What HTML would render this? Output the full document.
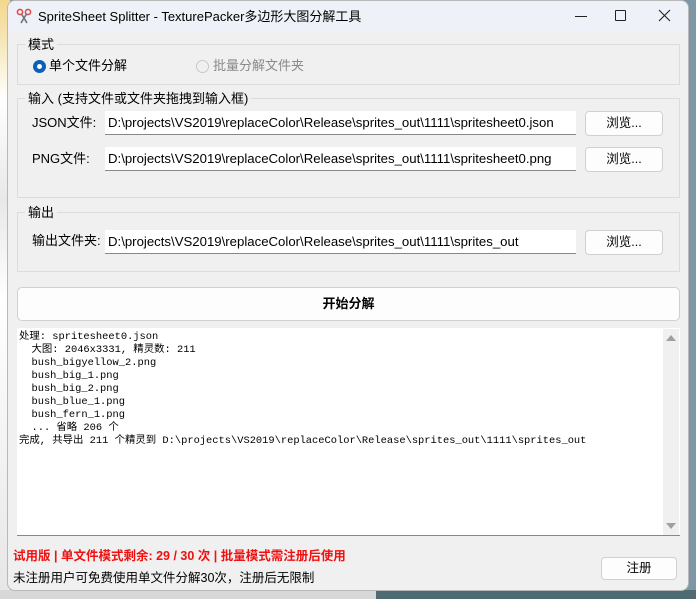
<!DOCTYPE html>
<html><head><meta charset="utf-8"><style>
*{box-sizing:border-box;margin:0;padding:0}
body{width:696px;height:599px;position:relative;overflow:hidden;background:#7e97a6;font-family:"Liberation Sans","Noto Sans CJK SC",sans-serif;font-size:13px;line-height:16px;color:#000}
.abs{position:absolute}
#leftbg{left:0;top:0;width:10px;height:599px;background:linear-gradient(#f3d78c 0,#f6e6b8 40px,#fff 100px,#e8e8e8 200px,#fff 300px,#e6e6e6 599px)}
#botbg{left:0;top:590px;width:696px;height:9px;background:#d8d8d8}
#botbg2{left:376px;top:590px;width:320px;height:9px;background:#4f6b72}
#win{left:7px;top:0;width:682px;height:591px;background:#f0f0f0;border:1px solid #b8b8b8;border-radius:8px;overflow:hidden}
#title{left:0;top:0;width:680px;height:31px;background:#eef2f8}
.group{border:1px solid #dcdcdc}
.glabel{background:#f0f0f0;padding:0 3px}
.field{background:#fff;border-bottom:1px solid #888;height:24px;line-height:24px;padding-left:3px;white-space:nowrap;overflow:hidden;font-size:13.2px}
.btn{background:#fdfdfd;border:1px solid #d0d0d0;border-radius:4px;text-align:center;line-height:23px;font-size:12.5px}
.log{font-family:"Liberation Mono","Noto Sans CJK SC",monospace;font-size:10.4px;line-height:13px;white-space:pre}
</style></head><body>
<div class="abs" id="leftbg"></div>
<div class="abs" id="botbg"></div><div class="abs" id="botbg2"></div>
<div class="abs" id="win">
 <div class="abs" id="title"></div>
 <svg class="abs" style="left:8px;top:7px" width="16" height="16" viewBox="0 0 16 16"><circle cx="4" cy="4" r="2.6" fill="none" stroke="#e05050" stroke-width="1.6"/><circle cx="12" cy="4" r="2.6" fill="none" stroke="#e05050" stroke-width="1.6"/><path d="M5.5 6 L11 15 M10.5 6 L5 15" stroke="#707080" stroke-width="1.6"/></svg>
 <div class="abs" style="left:30px;top:8px;font-size:13px">SpriteSheet Splitter - TexturePacker多边形大图分解工具</div>
 <div class="abs" style="left:567px;top:15px;width:12px;height:1px;background:#222"></div>
 <div class="abs" style="left:607px;top:9px;width:11px;height:11px;border:1px solid #222;border-radius:1px"></div>
 <svg class="abs" style="left:650px;top:8px" width="13" height="13"><path d="M1 1L12 12M12 1L1 12" stroke="#222" stroke-width="1.1"/></svg>

 <div class="abs group" style="left:9px;top:43px;width:663px;height:41px"></div>
 <div class="abs glabel" style="left:17px;top:36px">模式</div>
 <div class="abs" style="left:25px;top:59px;width:13px;height:13px;border-radius:50%;background:#0a5fb8"><div style="margin:4px;width:5px;height:5px;border-radius:50%;background:#fff"></div></div>
 <div class="abs" style="left:41px;top:57px">单个文件分解</div>
 <div class="abs" style="left:188px;top:59px;width:13px;height:13px;border-radius:50%;border:1px solid #c8c8c8"></div>
 <div class="abs" style="left:205px;top:57px;color:#8a8a8a">批量分解文件夹</div>

 <div class="abs group" style="left:9px;top:97px;width:663px;height:100px"></div>
 <div class="abs glabel" style="left:17px;top:90px">输入 (支持文件或文件夹拖拽到输入框)</div>
 <div class="abs" style="left:24px;top:114px">JSON文件:</div>
 <div class="abs field" style="left:97px;top:110px;width:471px">D:\projects\VS2019\replaceColor\Release\sprites_out\1111\spritesheet0.json</div>
 <div class="abs btn" style="left:577px;top:110px;width:78px;height:25px">浏览...</div>
 <div class="abs" style="left:24px;top:150px">PNG文件:</div>
 <div class="abs field" style="left:97px;top:146px;width:471px">D:\projects\VS2019\replaceColor\Release\sprites_out\1111\spritesheet0.png</div>
 <div class="abs btn" style="left:577px;top:146px;width:78px;height:25px">浏览...</div>

 <div class="abs group" style="left:9px;top:211px;width:663px;height:60px"></div>
 <div class="abs glabel" style="left:17px;top:204px">输出</div>
 <div class="abs" style="left:24px;top:232px">输出文件夹:</div>
 <div class="abs field" style="left:97px;top:229px;width:471px">D:\projects\VS2019\replaceColor\Release\sprites_out\1111\sprites_out</div>
 <div class="abs btn" style="left:577px;top:229px;width:78px;height:25px">浏览...</div>

 <div class="abs btn" style="left:9px;top:286px;width:663px;height:34px;line-height:32px;font-weight:bold;font-size:13px;border-radius:5px">开始分解</div>

 <div class="abs" style="left:9px;top:327px;width:663px;height:208px;background:#fff;border-bottom:1px solid #888"></div>
 <div class="abs" style="left:655px;top:328px;width:16px;height:206px;background:#f0f0f0"></div>
 <svg class="abs" style="left:658px;top:333px" width="10" height="8"><path d="M0 7L5 1L10 7Z" fill="#a0a0a0"/></svg>
 <svg class="abs" style="left:658px;top:521px" width="10" height="8"><path d="M0 1L5 7L10 1Z" fill="#a0a0a0"/></svg>
 <div class="abs log" style="left:11px;top:330px">处理: spritesheet0.json
  大图: 2046x3331, 精灵数: 211
  bush_bigyellow_2.png
  bush_big_1.png
  bush_big_2.png
  bush_blue_1.png
  bush_fern_1.png
  ... 省略 206 个
完成, 共导出 211 个精灵到 D:\projects\VS2019\replaceColor\Release\sprites_out\1111\sprites_out</div>

 <div class="abs" style="left:5px;top:547px;color:#f01010;font-weight:bold;font-size:12.5px">试用版 | 单文件模式剩余: 29 / 30 次 | 批量模式需注册后使用</div>
 <div class="abs" style="left:5px;top:569px;font-size:12.5px">未注册用户可免费使用单文件分解30次，注册后无限制</div>
 <div class="abs btn" style="left:593px;top:556px;width:76px;height:23px;line-height:21px">注册</div>
</div>
</body></html>
